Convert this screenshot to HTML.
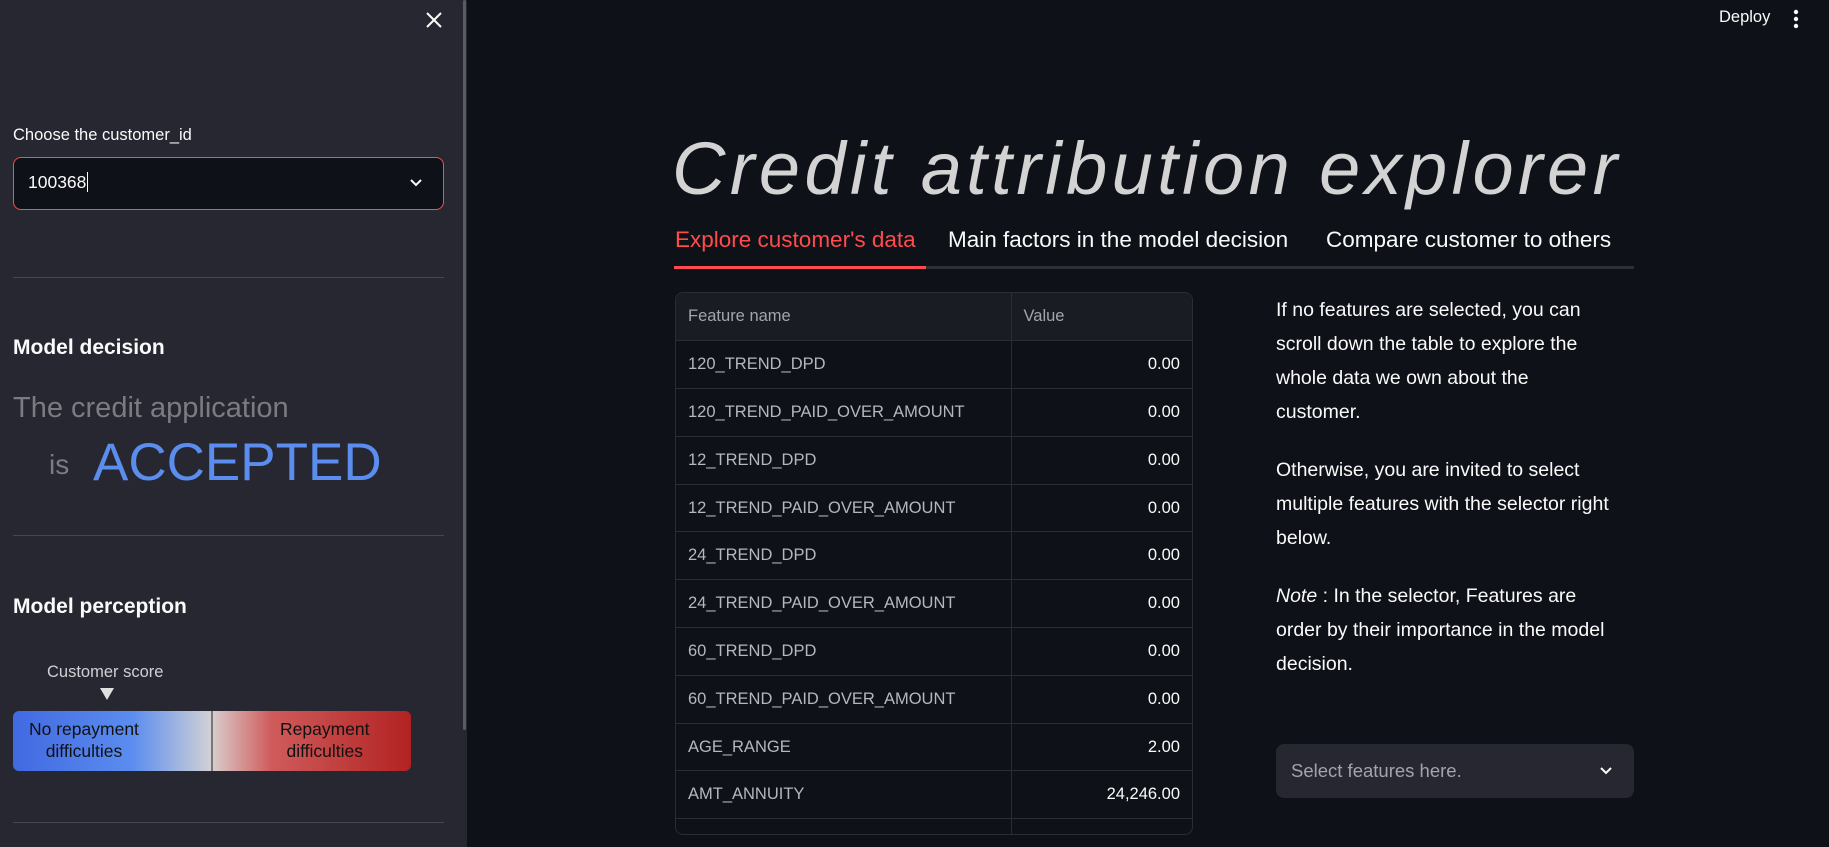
<!DOCTYPE html>
<html><head><meta charset="utf-8"><style>
*{box-sizing:border-box;margin:0;padding:0}
body{width:1829px;height:847px;overflow:hidden;background:#0e1117;font-family:"Liberation Sans",sans-serif;color:#fafafa;position:relative}
.a{position:absolute;white-space:nowrap}
#sb{position:absolute;left:0;top:0;width:467px;height:847px;background:#262730}
.hr{position:absolute;left:13px;width:431px;height:1px;background:#45464f}
table{border-collapse:collapse;width:100%;font-size:16.5px}
td{height:47.8px;border-bottom:1px solid #2b2d35;padding:0 12px;color:#b5b7bd}
td.v{text-align:right;color:#fafafa;border-left:1px solid #2b2d35}
tr.h td{background:#1a1c24;color:#a3a5ad}
.p{position:absolute;left:1276px;width:337px;font-size:19.5px;line-height:34px;color:#fafafa;white-space:normal}
</style></head><body>
<div id="sb">
<div class="a" style="left:463px;top:0;width:3px;height:730px;background:#5a5b63;border-radius:2px"></div>
<svg class="a" style="left:425px;top:11px" width="18" height="18" viewBox="0 0 18 18"><path d="M2 2L16 16M16 2L2 16" stroke="#fafafa" stroke-width="2"/></svg>
<div class="a" style="left:13px;top:126px;font-size:16.5px;color:#fafafa">Choose the customer_id</div>
<div class="a" style="left:13px;top:157px;width:431px;height:53px;background:#0e1117;border:1px solid #ff4b4b;border-radius:8px"></div>
<div class="a" style="left:28px;top:172px;font-size:17.5px">100368<span style="border-left:1.5px solid #fff;margin-left:1px"></span></div>
<svg class="a" style="left:409px;top:178px" width="14" height="10" viewBox="0 0 14 10"><path d="M2 2L7 7L12 2" stroke="#fafafa" stroke-width="2" fill="none"/></svg>
<div class="hr" style="top:277px"></div>
<div class="a" style="left:13px;top:336px;font-size:21px;font-weight:bold">Model decision</div>
<div class="a" style="left:13px;top:392px;font-size:29px;color:#7b7c82">The credit application</div>
<div class="a" style="left:49px;top:449px;font-size:28px;color:#7b7c82">is</div>
<div class="a" style="left:93px;top:432px;font-size:53px;color:#5b8def">ACCEPTED</div>
<div class="hr" style="top:535px"></div>
<div class="a" style="left:13px;top:595px;font-size:21px;font-weight:bold">Model perception</div>
<div class="a" style="left:47px;top:663px;font-size:16.5px;color:#d0d0d5">Customer score</div>
<svg class="a" style="left:100px;top:688px" width="14" height="12"><path d="M0 0H14L7 12Z" fill="#e0e0e0"/></svg>
<div class="a" style="left:13px;top:711px;width:398px;height:60px;border-radius:6px;background:linear-gradient(90deg,#4169e1 0%,#5b8def 30%,#d0d0d5 49.5%,#d9c9c9 50.5%,#cf5b5b 65%,#b22222 100%)"></div>
<div class="a" style="left:211px;top:711px;width:2px;height:60px;background:#777"></div>
<div class="a" style="left:29px;top:718px;font-size:17.5px;color:#111;line-height:22px;text-align:center">No repayment<br>difficulties</div>
<div class="a" style="left:280px;top:718px;font-size:17.5px;color:#111;line-height:22px;text-align:center">Repayment<br>difficulties</div>
<div class="hr" style="top:822px"></div>
</div>
<div class="a" style="left:1719px;top:8px;font-size:16.5px">Deploy</div>
<svg class="a" style="left:1792px;top:8px" width="8" height="22"><circle cx="4" cy="4" r="2.2" fill="#fafafa"/><circle cx="4" cy="11" r="2.2" fill="#fafafa"/><circle cx="4" cy="18" r="2.2" fill="#fafafa"/></svg>
<div class="a" style="left:672px;top:126px;font-size:74px;font-style:italic;color:#d3d3d3;letter-spacing:4.4px">Credit attribution explorer</div>
<div class="a" style="left:675px;top:227px;font-size:22.5px;color:#ff4b4b">Explore customer's data</div>
<div class="a" style="left:948px;top:227px;font-size:22.5px">Main factors in the model decision</div>
<div class="a" style="left:1326px;top:227px;font-size:22.5px">Compare customer to others</div>
<div class="a" style="left:674px;top:266px;width:960px;height:3px;background:#2e3038"></div>
<div class="a" style="left:674px;top:266px;width:252px;height:3px;background:#ff4b4b"></div>
<div class="a" style="left:675px;top:292px;width:518px;height:543px;border:1px solid #2b2d35;border-radius:8px;overflow:hidden">
<table><colgroup><col style="width:335px"><col></colgroup>
<tr class="h"><td>Feature name</td><td class="v" style="text-align:left;color:#a3a5ad">Value</td></tr>
<tr><td>120_TREND_DPD</td><td class="v">0.00</td></tr>
<tr><td>120_TREND_PAID_OVER_AMOUNT</td><td class="v">0.00</td></tr>
<tr><td>12_TREND_DPD</td><td class="v">0.00</td></tr>
<tr><td>12_TREND_PAID_OVER_AMOUNT</td><td class="v">0.00</td></tr>
<tr><td>24_TREND_DPD</td><td class="v">0.00</td></tr>
<tr><td>24_TREND_PAID_OVER_AMOUNT</td><td class="v">0.00</td></tr>
<tr><td>60_TREND_DPD</td><td class="v">0.00</td></tr>
<tr><td>60_TREND_PAID_OVER_AMOUNT</td><td class="v">0.00</td></tr>
<tr><td>AGE_RANGE</td><td class="v">2.00</td></tr>
<tr><td>AMT_ANNUITY</td><td class="v">24,246.00</td></tr>
<tr><td>AMT_CREDIT</td><td class="v">675,000.00</td></tr>
</table></div>
<div class="p" style="top:293px">If no features are selected, you can scroll down the table to explore the whole data we own about the customer.</div>
<div class="p" style="top:453px">Otherwise, you are invited to select multiple features with the selector right below.</div>
<div class="p" style="top:579px"><i>Note</i> : In the selector, Features are order by their importance in the model decision.</div>
<div class="a" style="left:1276px;top:744px;width:358px;height:54px;background:#262730;border-radius:8px"></div>
<div class="a" style="left:1291px;top:760px;font-size:18.5px;color:#a3a5ad">Select features here.</div>
<svg class="a" style="left:1599px;top:766px" width="14" height="10" viewBox="0 0 14 10"><path d="M2 2L7 7L12 2" stroke="#fafafa" stroke-width="2" fill="none"/></svg>
</body></html>
